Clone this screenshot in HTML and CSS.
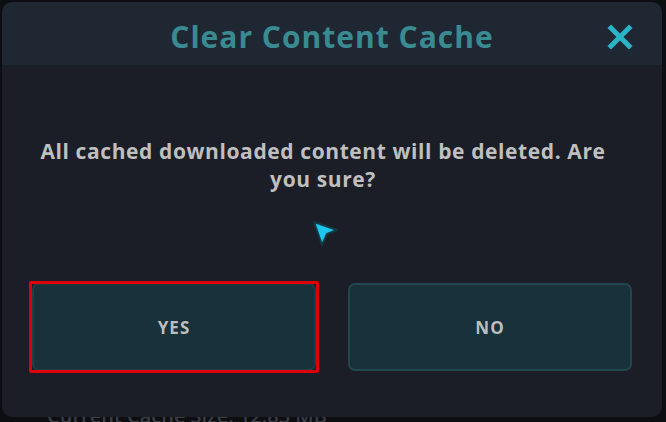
FILE: index.html
```html
<!DOCTYPE html>
<html lang="en">
<head>
    <meta charset="UTF-8">
    <meta name="viewport" content="width=device-width, initial-scale=1.0">
    <title>Clear Content Cache</title>
    <link rel="stylesheet" href="styles.css">
</head>
<body>

<!-- Settings page behind the dialog -->
<div class="backdrop">
    <div class="backdrop-row">Current Cache Size: 12.83 MB</div>
</div>

<!-- Dialog -->
<div class="dialog">
    <div class="dialog-header">
        <div class="dialog-title">Clear Content Cache</div>
        <button class="close-btn" aria-label="Close">
            <svg width="26" height="26" viewBox="0 0 26 26">
                <path d="M4 4 L22 22 M22 4 L4 22" stroke="#2bb3c8" stroke-width="5" stroke-linecap="square"/>
            </svg>
        </button>
    </div>

    <div class="dialog-body">
        <p class="message">All cached downloaded content will be deleted. Are you sure?</p>

        <div class="actions">
            <button class="action selected">YES</button>
            <button class="action">NO</button>
        </div>
    </div>
</div>

<!-- Pointer -->
<svg class="pointer" width="30" height="30" viewBox="0 0 30 30">
    <polygon points="4,4 27,12 17,16 12,27" fill="#1ec6ee" stroke="#0f3a44" stroke-width="2" stroke-linejoin="round"/>
</svg>

</body>
</html>
```

FILE: styles.css
```css
body {
    margin: 0;
    width: 666px;
    height: 422px;
    overflow: hidden;
    background-color: #0c0e12;
    font-family: "Open Sans", "Noto Sans", sans-serif;
    position: relative;
}
.backdrop {
    position: absolute;
    left: 47px;
    top: 402px;
}
.backdrop-row {
    font-size: 20px;
    font-weight: 600;
    color: #3a3d44;
}
.dialog {
    position: absolute;
    left: 2px;
    top: 2px;
    width: 660px;
    height: 415px;
    background-color: #1b1e26;
    border-radius: 10px;
    overflow: hidden;
    display: flex;
    flex-direction: column;
}
.dialog-header {
    height: 63px;
    background-color: #1f2733;
    display: flex;
    align-items: center;
    justify-content: center;
    position: relative;
}
.dialog-title {
    font-size: 30px;
    font-weight: 700;
    color: #3a8a92;
    letter-spacing: 1px;
    margin-top: 6px;
}
.close-btn {
    position: absolute;
    right: 29px;
    top: 22px;
    background: none;
    border: none;
    padding: 0;
    width: 26px;
    height: 26px;
    cursor: pointer;
}
.dialog-body {
    flex: 1;
    display: flex;
    flex-direction: column;
    align-items: center;
    padding: 72px 30px 0;
}
.message {
    margin: 0 18px 0 0;
    max-width: 590px;
    text-align: center;
    font-size: 21px;
    font-weight: 700;
    line-height: 28px;
    letter-spacing: 0.6px;
    color: #bfbfbf;
}
.actions {
    align-self: stretch;
    display: grid;
    grid-template-columns: 1fr 1fr;
    gap: 32px;
    margin-top: 90px;
}
.action {
    position: relative;
    height: 88px;
    background-color: #19313a;
    border: 2px solid #23464d;
    border-radius: 7px;
    font-family: "Open Sans", "Noto Sans", sans-serif;
    font-size: 17px;
    font-weight: 700;
    letter-spacing: 1px;
    color: #bdbdbd;
    cursor: pointer;
}
.action.selected {
    border-color: #1f3f46;
}
.action.selected::before {
    content: "";
    position: absolute;
    inset: -4px -5px;
    border: 3px solid #e0000a;
    border-radius: 2px;
}
.pointer {
    position: absolute;
    left: 310px;
    top: 218px;
}
```
